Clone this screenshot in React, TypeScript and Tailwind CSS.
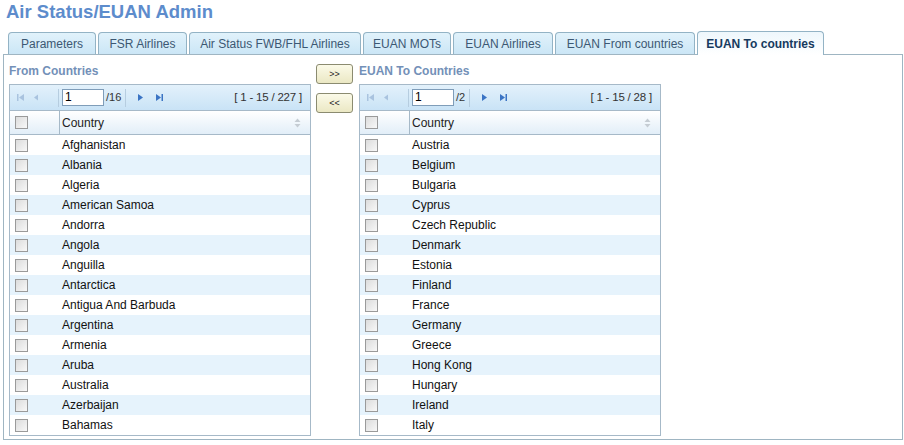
import React from "react";

const tabs = [
	{ label: "Parameters", w: "w-[88px]" },
	{ label: "FSR Airlines", w: "w-[89px]" },
	{ label: "Air Status FWB/FHL Airlines", w: "w-[172px]" },
	{ label: "EUAN MOTs", w: "w-[88px]" },
	{ label: "EUAN Airlines", w: "w-[100px]" },
	{ label: "EUAN From countries", w: "w-[140px]" },
	{ label: "EUAN To countries", w: "w-[127px]", active: true },
];

const fromCountries = [
	"Afghanistan",
	"Albania",
	"Algeria",
	"American Samoa",
	"Andorra",
	"Angola",
	"Anguilla",
	"Antarctica",
	"Antigua And Barbuda",
	"Argentina",
	"Armenia",
	"Aruba",
	"Australia",
	"Azerbaijan",
	"Bahamas",
];

const toCountries = [
	"Austria",
	"Belgium",
	"Bulgaria",
	"Cyprus",
	"Czech Republic",
	"Denmark",
	"Estonia",
	"Finland",
	"France",
	"Germany",
	"Greece",
	"Hong Kong",
	"Hungary",
	"Ireland",
	"Italy",
];

function Checkbox() {
	return (
		<div className="w-[13px] h-[13px] border border-[#9a9a9a] bg-gradient-to-br from-[#dcdcdc] to-[#f8f8f8]" />
	);
}

function PagerIcon({ kind, active }: { kind: "first" | "prev" | "next" | "last"; active: boolean }) {
	const c = active ? "#3b74c4" : "#a9c3df";
	return (
		<svg width="10" height="9" viewBox="0 0 10 9" className="shrink-0">
			{kind === "first" && (
				<>
					<rect x="1" y="1" width="1.5" height="7" fill={c} />
					<polygon points="8,1 3,4.5 8,8" fill={c} />
				</>
			)}
			{kind === "prev" && <polygon points="7,1.5 3,4.5 7,7.5" fill={c} />}
			{kind === "next" && <polygon points="3,1 8,4.5 3,8" fill={c} />}
			{kind === "last" && (
				<>
					<polygon points="2,1 7,4.5 2,8" fill={c} />
					<rect x="7.5" y="1" width="1.5" height="7" fill={c} />
				</>
			)}
		</svg>
	);
}

function Grid({ total, pages, rows }: { total: number; pages: number; rows: string[] }) {
	return (
		<div className="w-[302px] border border-[#a6b9c8] bg-white">
			{/* pager */}
			<div className="h-[26px] flex items-center bg-gradient-to-b from-[#e3f1fb] to-[#c9e3f6] border-b border-[#a6b9c8] text-[11px] text-[#333] pl-[6px] pr-[8px]">
				<PagerIcon kind="first" active={false} />
				<div className="ml-[5px]">
					<PagerIcon kind="prev" active={false} />
				</div>
				<div className="w-px h-[18px] bg-[#b6cde0] ml-[17px] mr-[3px]" />
				<div className="w-[42px] h-[17px] border border-[#7f9db9] bg-white text-[12px] leading-[15px] pl-[2px] text-black">1</div>
				<span className="ml-[2px] text-[11px]">/{pages}</span>
				<div className="w-px h-[18px] bg-[#b6cde0] ml-[4px]" />
				<div className="ml-[9px]">
					<PagerIcon kind="next" active />
				</div>
				<div className="ml-[9px]">
					<PagerIcon kind="last" active />
				</div>
				<span className="ml-auto text-[11.5px] tracking-[-0.2px]">[ 1 - 15 / {total} ]</span>
			</div>
			{/* header */}
			<div className="h-[24px] flex bg-gradient-to-b from-white to-[#e2eef8] border-b border-[#a6b9c8]">
				<div className="w-[50px] flex items-center pl-[5px] border-r border-[#a6b9c8]">
					<Checkbox />
				</div>
				<div className="flex-1 flex items-center pl-[2px] text-[12px] text-[#222]">Country</div>
				<div className="w-[16px] flex items-center">
					<svg width="7" height="10" viewBox="0 0 7 10">
						<polygon points="3.5,0.5 6.5,4 0.5,4" fill="#c5ccd3" />
						<polygon points="0.5,6 6.5,6 3.5,9.5" fill="#c5ccd3" />
					</svg>
				</div>
			</div>
			{rows.map((r, i) => (
				<div key={r} className={`h-[20px] flex items-center ${i % 2 === 1 ? "bg-[#e6f3fc]" : "bg-white"}`}>
					<div className="w-[50px] flex items-center pl-[5px]">
						<Checkbox />
					</div>
					<div className="pl-[2px] text-[12px] text-[#111]">{r}</div>
				</div>
			))}
		</div>
	);
}

function MoveButton({ label }: { label: string }) {
	return (
		<button className="w-[37px] h-[20px] border border-[#8b8b70] rounded-[3px] bg-gradient-to-b from-[#fbfae8] to-[#ebe8c4] text-[9px] text-[#222] leading-none">
			{label}
		</button>
	);
}

export default function App() {
	return (
		<div className="w-[904px] h-[445px] bg-white font-['Liberation_Sans',Arial,sans-serif] overflow-hidden">
			<h1 className="pl-[6px] pt-[1px] h-[30px] text-[18.5px] font-bold text-[#5d8ccc] leading-[22px]">
				Air Status/EUAN Admin
			</h1>
			{/* tabs */}
			<div className="flex items-end gap-[2px] pl-[8px] h-[24px] relative z-10">
				{tabs.map((t) =>
					t.active ? (
						<div
							key={t.label}
							className={`${t.w} h-[24px] -mb-px flex items-center justify-center rounded-t-[4px] border border-b-0 border-[#93b3c5] bg-gradient-to-b from-[#eef7fc] to-white text-[12px] font-bold text-[#173a5e]`}
						>
							{t.label}
						</div>
					) : (
						<div
							key={t.label}
							className={`${t.w} h-[22px] flex items-center justify-center rounded-t-[4px] border border-b-0 border-[#93b3c5] bg-gradient-to-b from-[#e1f2fb] to-[#cbe6f6] text-[12px] text-[#3c5873]`}
						>
							{t.label}
						</div>
					)
				)}
			</div>
			{/* panel */}
			<div className="ml-[3px] w-[900px] h-[386px] border border-[#9fb5c2] flex pl-[5px] pt-[9px]">
				<div className="flex flex-col">
					<div className="h-[20px] text-[12px] font-bold text-[#7390b8] leading-[14px]">From Countries</div>
					<Grid total={227} pages={16} rows={fromCountries} />
				</div>
				<div className="flex flex-col gap-[9px] ml-[5px]">
					<MoveButton label=">>" />
					<MoveButton label="<<" />
				</div>
				<div className="flex flex-col ml-[6px]">
					<div className="h-[20px] text-[12px] font-bold text-[#7390b8] leading-[14px]">EUAN To Countries</div>
					<Grid total={28} pages={2} rows={toCountries} />
				</div>
			</div>
		</div>
	);
}
